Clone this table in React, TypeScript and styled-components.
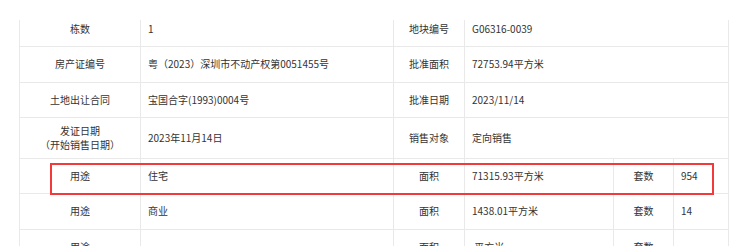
import styled, { createGlobalStyle } from "styled-components";

const GlobalStyle = createGlobalStyle`
  html, body {
    margin: 0;
    padding: 0;
    background: #ffffff;
  }
`;

const Page = styled.div`
  position: relative;
  width: 740px;
  height: 246px;
  overflow: hidden;
  padding: 20px 0 0 19px;
  box-sizing: border-box;
  font-family: "Noto Sans CJK SC", "Noto Sans", sans-serif;
  font-size: 10px;
  color: #333333;
`;

const Table = styled.table`
  border-collapse: collapse;
  table-layout: fixed;
  width: 709px;
`;

const Row = styled.tr<{ $h: number }>`
  height: ${(p) => p.$h}px;
`;

const Cell = styled.td<{ $label?: boolean; $first?: boolean }>`
  border: 1px solid #e9e9e9;
  border-top: ${(p) => (p.$first ? "none" : "1px solid #e9e9e9")};
  text-align: ${(p) => (p.$label ? "center" : "left")};
  padding: ${(p) => (p.$first ? "0 7px 8px" : "0 7px")};
  line-height: 14px;
  vertical-align: middle;
  white-space: nowrap;
`;

const Highlight = styled.div`
  position: absolute;
  left: 50px;
  top: 163px;
  width: 664px;
  height: 32px;
  box-sizing: border-box;
  border: 2px solid #f23a3a;
  pointer-events: none;
`;

const topRows = [
  { h: 26, a: "栋数", b: "1", c: "地块编号", d: "G06316-0039" },
  { h: 36, a: "房产证编号", b: "粤（2023）深圳市不动产权第0051455号", c: "批准面积", d: "72753.94平方米" },
  { h: 35, a: "土地出让合同", b: "宝国合字(1993)0004号", c: "批准日期", d: "2023/11/14" },
  { h: 41, a: "发证日期\n（开始销售日期）", b: "2023年11月14日", c: "销售对象", d: "定向销售" },
];

const useRows = [
  { h: 35, use: "住宅", area: "71315.93平方米", count: "954" },
  { h: 36, use: "商业", area: "1438.01平方米", count: "14" },
  { h: 36, use: "", area: "\u00a0平方米", count: "" },
];

export default function App() {
  return (
    <Page>
      <GlobalStyle />
      <Table>
        <colgroup>
          <col style={{ width: 121 }} />
          <col style={{ width: 253 }} />
          <col style={{ width: 71 }} />
          <col style={{ width: 149 }} />
          <col style={{ width: 60 }} />
          <col style={{ width: 55 }} />
        </colgroup>
        <tbody>
          {topRows.map((r, i) => (
            <Row key={r.a} $h={r.h}>
              <Cell $label $first={i === 0}>
                {r.a.split("\n").map((t) => (
                  <div key={t}>{t}</div>
                ))}
              </Cell>
              <Cell $first={i === 0}>{r.b}</Cell>
              <Cell $label $first={i === 0}>{r.c}</Cell>
              <Cell colSpan={3} $first={i === 0}>{r.d}</Cell>
            </Row>
          ))}
          {useRows.map((r, i) => (
            <Row key={i} $h={r.h}>
              <Cell $label>用途</Cell>
              <Cell>{r.use}</Cell>
              <Cell $label>面积</Cell>
              <Cell>{r.area}</Cell>
              <Cell $label>套数</Cell>
              <Cell>{r.count}</Cell>
            </Row>
          ))}
        </tbody>
      </Table>
      <Highlight />
    </Page>
  );
}
